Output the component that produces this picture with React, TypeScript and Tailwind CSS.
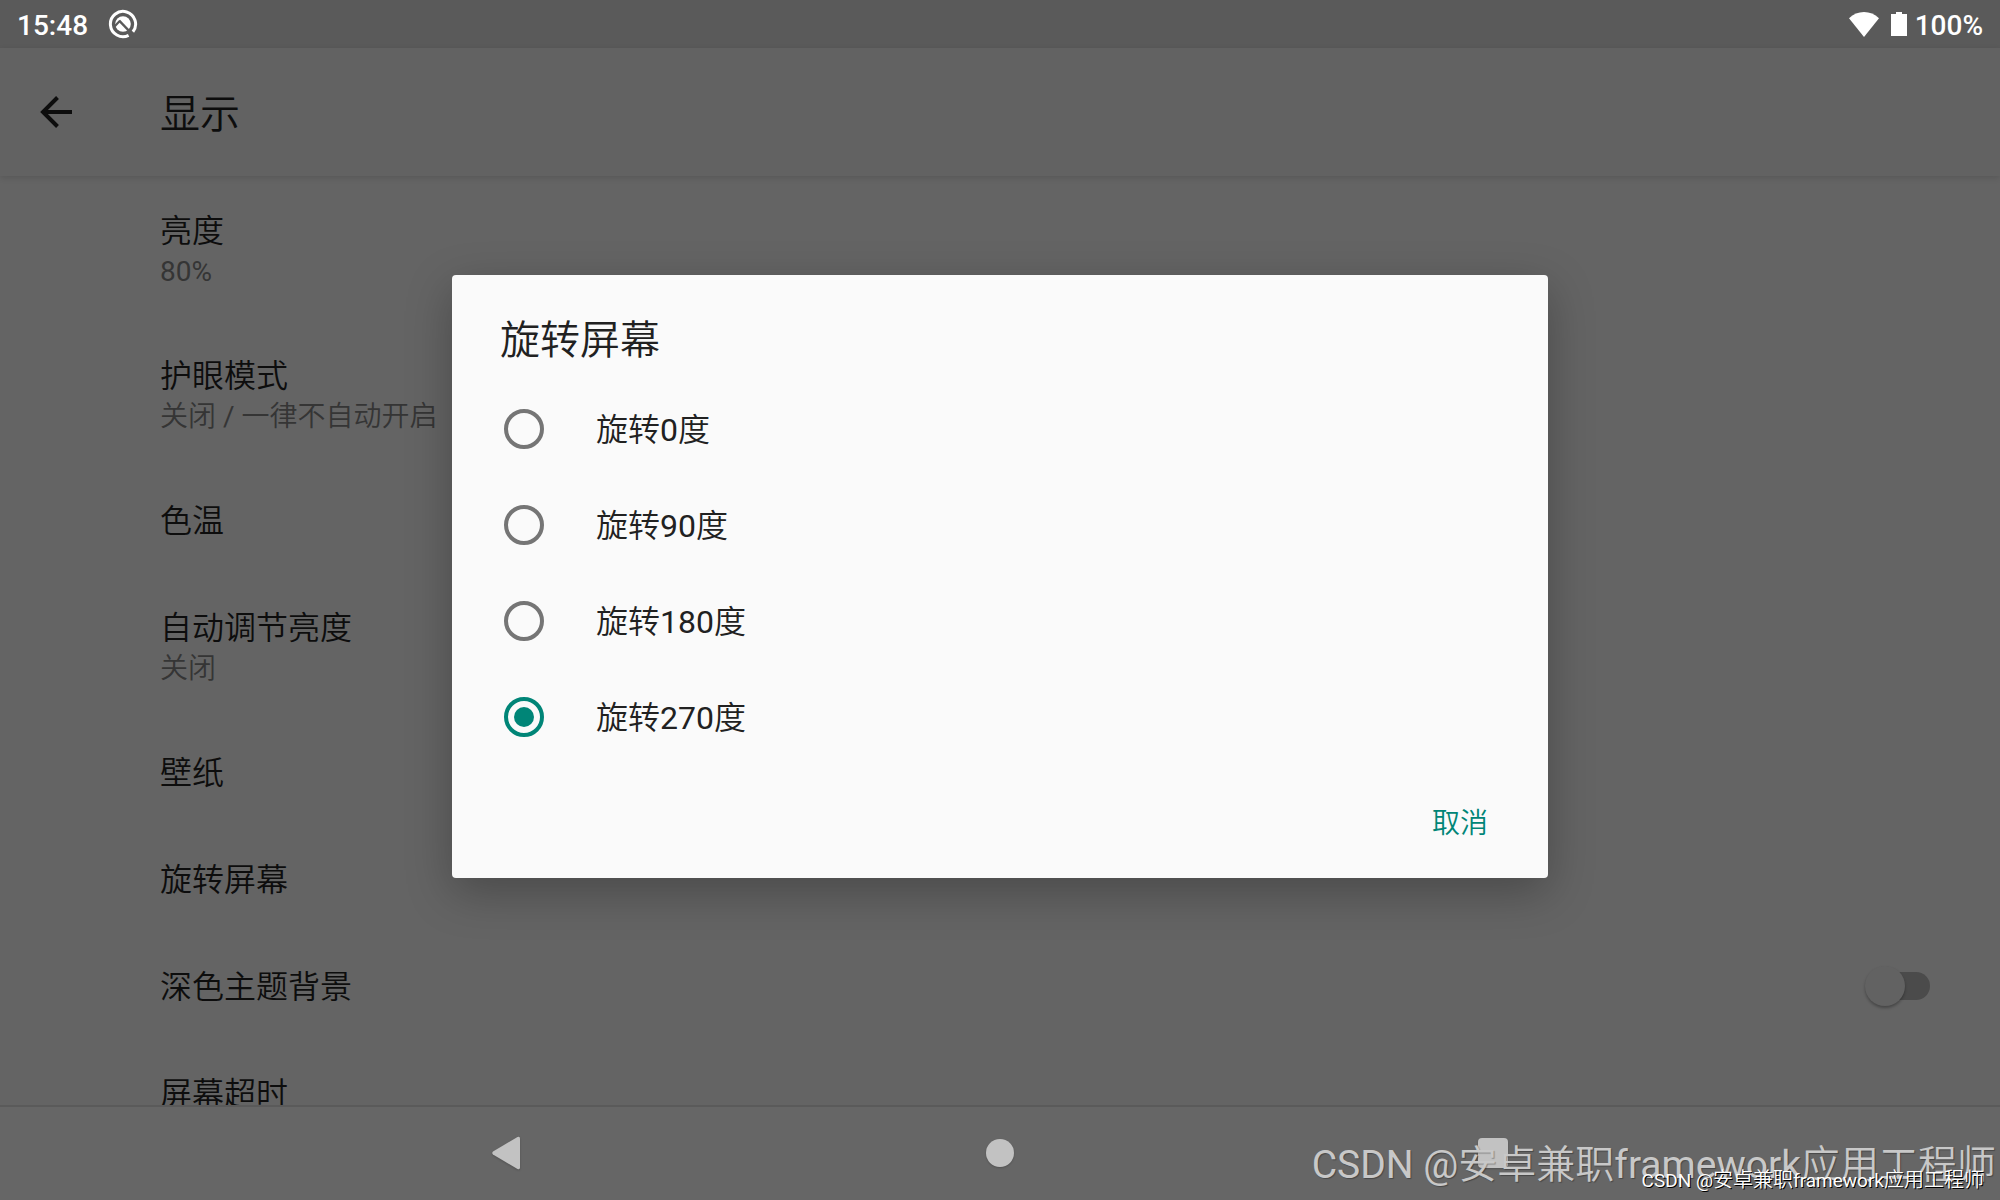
import React, { useState } from "react";

type Setting = { title: string; summary?: string; toggle?: boolean };

const settings: Setting[] = [
  { title: "亮度", summary: "80%" },
  { title: "护眼模式", summary: "关闭 / 一律不自动开启" },
  { title: "色温" },
  { title: "自动调节亮度", summary: "关闭" },
  { title: "壁纸" },
  { title: "旋转屏幕" },
  { title: "深色主题背景", toggle: true },
  { title: "屏幕超时" },
];

const rotations = ["旋转0度", "旋转90度", "旋转180度", "旋转270度"];

const watermark = "CSDN @安卓兼职framework应用工程师";

// Chinese inherits the lighter page weight; Latin letters and digits stay regular.
function Mixed({ text, latin = "font-normal" }: { text: string; latin?: string }) {
  return (
    <>
      {text.split(/([\x20-\x7e]+)/).map((part, i) =>
        i % 2 ? (
          <span key={i} className={latin}>
            {part}
          </span>
        ) : (
          part
        ),
      )}
    </>
  );
}

function StatusBar() {
  return (
    <div className="flex h-12 shrink-0 items-center justify-between bg-[#5a5a5a] px-[17px] text-[28px] leading-[44px] font-medium text-white">
      <div className="flex items-center gap-5">
        <span className="pt-1">15:48</span>
        <svg width="30" height="30" viewBox="0 0 30 30" aria-hidden="true">
          <path d="M20.6 26.3A12.6 12.6 0 1 1 24.9 22.8" fill="none" stroke="#fff" strokeWidth="3" />
          <circle cx="15" cy="15" r="7.8" fill="#fff" />
          <path d="M11.2 11.6L25 26" stroke="#5a5a5a" strokeWidth="2.4" />
          <path d="M6.5 17.5L12 11.8" stroke="#5a5a5a" strokeWidth="2.2" />
        </svg>
      </div>
      <div className="flex items-center gap-2">
        <div className="flex items-center gap-3">
          <svg width="30" height="25" viewBox="0 0 30 25" aria-hidden="true">
            <path d="M15 25L0 6.2C4.2 2.2 9.4 0 15 0s10.800 2.200 15 6.200z" fill="#fff" />
          </svg>
          <svg width="16" height="24" viewBox="0 0 16 24" aria-hidden="true">
            <path d="M5 0h6v2h5v22H0V2h5z" fill="#fff" />
          </svg>
        </div>
        <span className="pt-1">100%</span>
      </div>
    </div>
  );
}

function SettingRow({ title, summary, toggle }: Setting) {
  const text = (
    <span className="flex flex-col">
      <span className="text-[32px] leading-[43px] text-[#0d0d0d]">{title}</span>
      {summary && (
        <span className="text-[28px] leading-[38px] text-[#353535]">
          <Mixed text={summary} />
        </span>
      )}
    </span>
  );
  return (
    <li>
      {toggle ? (
        <label className="flex items-center justify-between py-8 pr-[70px] pl-40">
          {text}
          <input
            type="checkbox"
            role="switch"
            className="relative mb-1 h-7 w-[59px] appearance-none rounded-full bg-[#4b4b4b] before:absolute before:-top-1.5 before:-left-1.5 before:size-10 before:rounded-full before:bg-[#626262] before:shadow-[0_2px_3px_rgba(0,0,0,0.3)]"
          />
        </label>
      ) : (
        <button type="button" className="flex w-full py-8 pr-[70px] pl-40 text-left">
          {text}
        </button>
      )}
    </li>
  );
}

function RotationDialog() {
  const [selected, setSelected] = useState(3);
  return (
    <div
      role="dialog"
      aria-labelledby="rotation-title"
      className="w-full max-w-[1096px] rounded bg-[#fafafa] shadow-[0_14px_46px_rgba(0,0,0,0.27)]"
    >
      <h2 id="rotation-title" className="px-12 pt-[38px] pb-3 text-[40px] leading-[56px] font-[350] text-[#212121]">
        旋转屏幕
      </h2>
      <div role="radiogroup" aria-labelledby="rotation-title">
        {rotations.map((name, i) => (
          <label key={name} className="flex h-24 items-center gap-[52px] px-[52px] text-[32px] text-[#212121]">
            <input
              type="radio"
              name="rotation"
              checked={selected === i}
              onChange={() => setSelected(i)}
              className="grid size-10 appearance-none place-items-center rounded-full border-4 border-[#757575] checked:border-[#008577] checked:before:size-5 checked:before:rounded-full checked:before:bg-[#008577]"
            />
            <span className="pt-0.5">
              <Mixed text={name} />
            </span>
          </label>
        ))}
      </div>
      <div className="flex h-[113px] items-center justify-end px-[60px] pt-1">
        <button type="button" className="text-[28px] text-[#008577]">
          取消
        </button>
      </div>
    </div>
  );
}

function NavBar() {
  return (
    <nav className="flex h-[95px] shrink-0 items-center justify-center gap-[464px] border-t-2 border-[#5a5a5a] bg-[#666666] pb-0.5">
      <button type="button" aria-label="返回" className="drop-shadow-[0_1px_1px_rgba(0,0,0,0.2)]">
        <svg className="block" width="30" height="34" viewBox="0 0 30 34">
          <path d="M1 15.500L25.500 1Q28 0 28 2.500V31.500Q28 34 25.500 33L1 18.500Q-0.500 17 1 15.500z" fill="#c2c2c2" />
        </svg>
      </button>
      <button
        type="button"
        aria-label="主屏幕"
        className="size-7 rounded-full bg-[#c2c2c2] shadow-[0_1px_2px_rgba(0,0,0,0.2)]"
      />
      <button
        type="button"
        aria-label="最近任务"
        className="size-[30px] rounded bg-[#c2c2c2] shadow-[0_1px_2px_rgba(0,0,0,0.2)]"
      />
    </nav>
  );
}

export default function App() {
  return (
    <div
      lang="zh-CN"
      className="relative flex h-screen flex-col overflow-hidden bg-[#646464] font-['Roboto','Noto_Sans_CJK_SC',sans-serif] font-[350]"
    >
      <StatusBar />
      <div className="relative flex min-h-0 flex-1 flex-col">
        <header className="flex h-32 shrink-0 items-center bg-[#626262] px-10 shadow-[0_2px_6px_rgba(0,0,0,0.12)]">
          <button type="button" aria-label="返回" className="mr-[88px]">
            <svg width="32" height="32" viewBox="0 0 32 32" fill="none" stroke="#0d0d0d" strokeWidth="4">
              <path d="M32 16H4M17.500 1.500L3 16l14.500 14.500" />
            </svg>
          </button>
          <h1 className="pt-1.5 text-[40px] leading-[56px] text-[#0d0d0d]">显示</h1>
        </header>
        <ul className="min-h-0 flex-1 overflow-hidden pt-0.5">
          {settings.map((s) => (
            <SettingRow key={s.title} {...s} />
          ))}
        </ul>
        <div className="absolute inset-0 flex items-center justify-center">
          <RotationDialog />
        </div>
      </div>
      <NavBar />
      <div className="pointer-events-none absolute right-1 bottom-[7px] text-[39px] leading-[56px] text-[#c8c8c8] [text-shadow:1px_1px_1px_rgba(0,0,0,0.3)]">
        <Mixed text={watermark} />
      </div>
      <div className="pointer-events-none absolute right-4 bottom-[5px] text-[20px] leading-7 text-white [text-shadow:1px_1px_0_#000]">
        <Mixed text={watermark} latin="text-[19px] font-normal" />
      </div>
    </div>
  );
}
